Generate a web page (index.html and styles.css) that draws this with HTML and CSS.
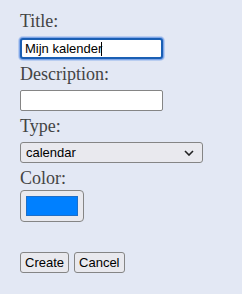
FILE: index.html
```html
<!DOCTYPE html>
<html>
<head>
<meta charset="utf-8">
<link rel="stylesheet" href="styles.css">
</head>
<body>
<form class="form">
  <label class="label" for="title">Title:</label>
  <div class="field-wrap">
    <input class="field field-focus" id="title" type="text" value="Mijn kalender">
    <span class="caret"></span>
  </div>
  <label class="label" for="desc">Description:</label>
  <input class="field" id="desc" type="text">
  <label class="label" for="type">Type:</label>
  <div class="select">
    <span>calendar</span>
    <svg class="chev" width="10" height="6" viewBox="0 0 10 6"><path d="M1 1l4 4 4-4" fill="none" stroke="#222" stroke-width="1.6"/></svg>
  </div>
  <label class="label label-tight" for="color">Color:</label>
  <div class="color"><span class="swatch"></span></div>
  <div class="actions">
    <button type="button" class="btn">Create</button>
    <button type="button" class="btn">Cancel</button>
  </div>
</form>
</body>
</html>
```
FILE: styles.css
```css
html, body {
  margin: 0;
  background: #e3e8f4;
}
.form {
  display: flex;
  flex-direction: column;
  align-items: flex-start;
  padding: 11px 20px;
  font-family: "Liberation Serif", serif;
  color: #444;
}
.label {
  display: block;
  font-size: 18px;
  line-height: 21px;
  margin-bottom: 5px;
}
.label-tight {
  margin-bottom: 1px;
}
.field-wrap {
  position: relative;
  margin: 1px 0 5px 0;
}
.caret {
  position: absolute;
  left: 81px;
  top: 4px;
  width: 1px;
  height: 14px;
  background: #000;
}
.field {
  box-sizing: border-box;
  display: block;
  width: 143px;
  height: 21px;
  margin: 0 0 5px 0;
  padding: 1px 4px;
  border: 1px solid #858585;
  border-radius: 2px;
  background: #fff;
  font-family: "Liberation Sans", sans-serif;
  font-size: 13px;
  color: #000;
  outline: none;
}
.field-focus {
  margin: 0;
  border: 2px solid #1a5fb4;
  border-radius: 3px;
  box-shadow: 0 0 0 1px #7fa6e8, 0 0 0 2px #b9cdf0;
  padding: 0 3px;
}
.select {
  box-sizing: border-box;
  width: 183px;
  height: 21px;
  margin-bottom: 5px;
  display: flex;
  align-items: center;
  justify-content: space-between;
  padding: 0 8px 0 5px;
  border: 1px solid #858585;
  border-radius: 3px;
  background: #e9e9ee;
  font-family: "Liberation Sans", sans-serif;
  font-size: 13px;
  color: #000;
}
.color {
  box-sizing: border-box;
  width: 64px;
  height: 32px;
  padding: 5px 5px;
  border: 1px solid #858585;
  border-radius: 4px;
  background: #e9e9ee;
  display: flex;
}
.swatch {
  flex: 1;
  background: #0080ff;
  border: 1px solid #1e6fc8;
}
.actions {
  display: flex;
  gap: 5px;
  margin-top: 30px;
}
.btn {
  box-sizing: border-box;
  height: 21px;
  padding: 0 4px;
  border: 1px solid #858585;
  border-radius: 3px;
  background: #e9e9ee;
  font-family: "Liberation Sans", sans-serif;
  font-size: 13px;
  color: #000;
}
```
